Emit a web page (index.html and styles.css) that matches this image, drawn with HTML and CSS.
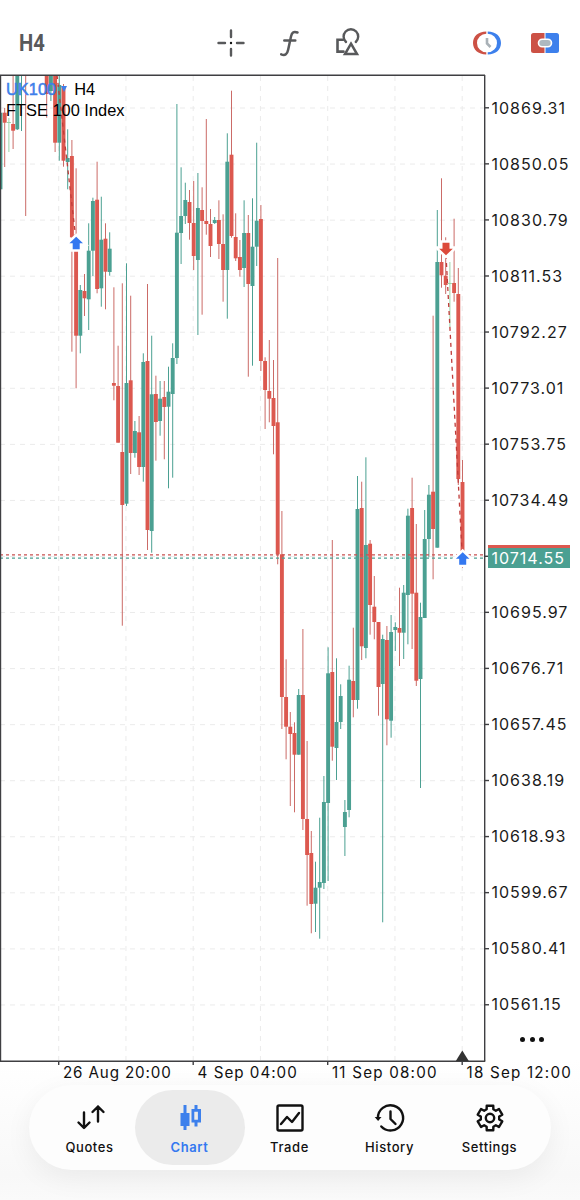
FILE: index.html
```html
<!DOCTYPE html>
<html lang="en">
<head>
<meta charset="utf-8">
<title>UK100 H4</title>
<link rel="stylesheet" href="styles.css">
</head>
<body>
<div class="app">
  <header class="toolbar">
    <span class="timeframe">H4</span>
    <div class="tools">
      <svg class="icon" viewBox="0 0 30 30"><path d="M15 2.500v6.500M15 21v6.500M2.500 15h6.500M21 15h6.500" stroke-width="2.400"/><circle cx="15" cy="15" r="1.2" class="solid"/></svg>
      <svg class="icon" viewBox="0 0 30 30"><path d="M23.500 4.500C19.500 2.800 17.800 4.800 17 8.500L14.200 21.500C13.300 26 11.200 28.100 7.200 26.300M10.300 12.500h11" stroke-width="2.500"/></svg>
      <svg class="icon shapes" viewBox="0 0 30 30"><path d="M12 14A7.300 7.300 0 1 1 21.800 14" stroke-width="2.400"/><path d="M9 11.800H3.500V23.600H9.500" stroke-width="2.600"/><path d="M17 15.700L23 26H11Z" stroke-width="2.500"/></svg>
    </div>
    <div class="modes">
      <svg class="icon" viewBox="0 0 30 30"><path class="red" d="M14.300 3.500C6 3.500 1 8.500 1 15S6 26.500 14.300 26.500V24.300A9.300 9.300 0 0 1 14.300 5.700Z"/><path class="blue" d="M15.700 3.500C24 3.500 29 8.500 29 15S24 26.500 15.700 26.500V24.300A9.300 9.300 0 0 0 15.700 5.700Z"/><path class="hands" d="M15 10V15.500L18.500 19"/></svg>
      <svg class="icon" viewBox="0 0 30 30"><path class="red" d="M14.500 5H3.500a2.500 2.500 0 0 0-2.500 2.500V22.500a2.500 2.500 0 0 0 2.500 2.500H14.500Z"/><path class="blue" d="M15.500 5H26.500a2.500 2.500 0 0 1 2.500 2.500V22.500a2.500 2.500 0 0 1-2.500 2.500H15.500Z"/><rect class="pill" x="8.500" y="11.300" width="13" height="7.400" rx="3.700"/></svg>
    </div>
  </header>
  <main class="chart">
    <svg class="plot" id="plot" viewBox="0 75 486 991"></svg>
    <div class="caption">
      <div><span class="symbol">UK100</span><span class="caret"></span><span>H4</span></div>
      <div>FTSE 100 Index</div>
    </div>
    <div class="prices">
      <div class="price">10869.31</div><div class="price">10850.05</div><div class="price">10830.79</div><div class="price">10811.53</div><div class="price">10792.27</div><div class="price">10773.01</div><div class="price">10753.75</div><div class="price">10734.49</div>
      <div class="price current"><span>10714.55</span></div>
      <div class="price">10695.97</div><div class="price">10676.71</div><div class="price">10657.45</div><div class="price">10638.19</div><div class="price">10618.93</div><div class="price">10599.67</div><div class="price">10580.41</div><div class="price">10561.15</div>
      <div class="more"><i></i><i></i><i></i></div>
    </div>
  </main>
  <div class="dates"><span class="tight">26 Aug 20:00</span><span>4 Sep 04:00</span><span class="loose">11 Sep 08:00</span><span class="loose">18 Sep 12:00</span></div>
  <nav class="tabs">
    <div class="tab"><svg class="tab-icon" viewBox="0 0 30 30"><path d="M9 8.500v15M3.500 18.500L9 24l5.500-5.500M23 17.500V2.500M17.500 8L23 2.500l5.500 5.500"/></svg><span>Quotes</span></div>
    <div class="tab active"><svg class="tab-icon" viewBox="0 0 30 30"><path class="blue" d="M8.500 1h3v8h3v13h-3v4h-3v-4H5.500V9h3Z"/><path class="blue" fill-rule="evenodd" d="M19.500 1h3v4h3.500v13.500h-3.500v4h-3v-4H16.500V5h3ZM19.300 7.800v8h3.600v-8Z"/></svg><span>Chart</span></div>
    <div class="tab"><svg class="tab-icon" viewBox="0 0 30 30"><rect x="2.500" y="1.500" width="25" height="25" rx="1.500"/><path d="M6 20l6-7 5 5 7-9"/></svg><span>Trade</span></div>
    <div class="tab"><svg class="tab-icon" viewBox="0 0 30 30"><path d="M2.900 14A12.600 12.600 0 1 1 6.300 22.500M15.500 7.500v7.500l5 5"/><path class="solid" d="M-.300 13H6.500l-3.400 4Z"/></svg><span>History</span></div>
    <div class="tab"><svg class="tab-icon" viewBox="0 0 30 30"><path id="gear" d=""/><circle cx="15" cy="14" r="4.200"/></svg><span>Settings</span></div>
  </nav>
</div>
<script src="chart.js"></script>
</body>
</html>
```
FILE: styles.css
```css
* { box-sizing: border-box; }
body { margin: 0; background: #fff; font-family: Inter, "Liberation Sans", sans-serif; color: #111; }
.app { width: 580px; height: 1200px; display: flex; flex-direction: column; overflow: hidden; background: linear-gradient(#fff 1060px, #fcfcfc 1110px, #f8f8f8 1175px, #fafafa); }
.toolbar { height: 75px; flex: none; display: flex; align-items: center; padding: 10px 20px 0 19px; }
.timeframe { width: 197px; font: 700 24px Roboto, sans-serif; color: #58595b; transform: scaleX(.84); transform-origin: left; }
.timeframe, .tools, .modes { flex: none; }
.tools { display: flex; gap: 28px; width: 256px; }
.shapes { margin-left: 2px; }
.modes { display: flex; gap: 28px; }
.icon { width: 30px; height: 30px; fill: none; stroke: #58595b; stroke-linecap: round; flex: none; }
.solid { fill: currentColor; stroke: none; }
.red { fill: #cc5145; stroke: none; }
.blue { fill: #3d80ec; stroke: none; }
.hands { stroke: #a9b1b7; stroke-width: 2.6; stroke-linecap: butt; }
.pill { fill: #aeb8c0; stroke: #fff; stroke-width: 1.6; }
.chart { height: 991px; flex: none; display: flex; position: relative; }
.plot { width: 486px; height: 991px; flex: none; overflow: visible; }
.up { fill: #4ba092; }
.down { fill: #dc584f; }
.wick-up { stroke: #4ba092; }
.wick-down { stroke: #cb6b67; }
.flat { fill: #9bd3a8; }
.wick-flat { stroke: #9bd3a8; }
.grid { stroke: #ebebeb; stroke-width: 1; stroke-dasharray: 5 5; fill: none; }
.axis { stroke: #3f3f42; stroke-width: 1.4; fill: none; }
.bid { stroke: #4ba092; stroke-width: 1.3; stroke-dasharray: 3 3; }
.ask { stroke: #c95050; stroke-width: 1.3; stroke-dasharray: 3 3; }
.trade { stroke: #c03c3a; stroke-width: 1.3; stroke-dasharray: 4 4; }
.buy { fill: #3478f0; }
.sell { fill: #dc4a3b; }
.halo { fill: #fff; stroke: #fff; stroke-width: 5; }
.marker { fill: #333; }
.caption { position: absolute; left: 6px; top: 3.500px; font: 16.400px/21px "Liberation Sans", sans-serif; color: #000; white-space: nowrap; }
.symbol { color: #3e7fea; -webkit-text-stroke: .5px #3e7fea; }
.caret { display: inline-block; border: 3.500px solid transparent; border-top: 6px solid #3e7fea; border-bottom: 0; margin: 0 7px 3px 5px; }
.prices { flex: 1; padding-top: 5px; }
.price { height: 56px; line-height: 56px; padding-left: 5.500px; font-size: 16px; letter-spacing: 1px; color: #1b1b1b; white-space: nowrap; }
.current { padding: 17px 0 0 1.500px; position: relative; }
.current span { display: block; width: 82px; height: 23px; border-top: 3px solid #dc584f; background: #4ba092; color: #fff; line-height: 20px; padding-left: 4px; }
.more { display: flex; gap: 4.500px; padding: 5px 0 0 34px; }
.more i { width: 5px; height: 5px; border-radius: 50%; background: #111; }
.dates { height: 19px; flex: none; display: grid; grid-template-columns: 134.600px 134.400px 134.600px 114px; padding-left: 63px; font-size: 15.200px; line-height: 14px; letter-spacing: 1px; color: #111; white-space: nowrap; }
.tight { letter-spacing: .85px; }
.loose { letter-spacing: 1.2px; }
.tabs { width: 522px; height: 85px; flex: none; margin-left: 29px; border-radius: 43px; background: #fdfdfd; box-shadow: 0 8px 28px rgba(0,0,0,.06); display: flex; padding: 5px 6px; justify-content: space-between; }
.tab { width: 110px; height: 75px; margin-right: -10px; border-radius: 38px; display: flex; flex-direction: column; align-items: center; padding: 14px 1px 0 0; font-size: 13px; font-weight: 500; letter-spacing: .6px; line-height: 16px; }
.tab:last-child { margin-right: 0; }
.active { background: #ebebeb; color: #3478f0; font-weight: 600; }
.tab-icon { width: 30px; height: 30px; flex: none; margin-bottom: 5px; fill: none; stroke: #111; stroke-width: 2.400; stroke-linecap: round; stroke-linejoin: round; overflow: visible; }
```
FILE: chart.js
```js
// Each candle: slot, colour, high, low, body top, body bottom.
const candles = [
[0,'u',112.7,189.3,112.7,189.3],[1,'d',108,167,112.7,122.7],[2,'f',118,152,122,123],[3,'d',75,149,124,130.7],[4,'u',75,130,75,129.3],[5,'u',75,131,75,75],[6,'d',75,216,75,75],
[11,'d',75,117.7,75,94],[12,'u',75,101,75,91],[13,'d',75,152,75,142.7],[14,'u',75,160.7,85,142.7],[15,'d',84,166.7,86,160.7],[16,'u',129.3,189.3,158,162],[17,'d',140,351.7,156,237.3],[18,'d',168.3,388.3,251,335.7],[19,'u',285,353.3,290,335.7],
[20,'d',274,316,291,298.3],[21,'u',223.3,330,250.7,299.3],[22,'u',197.7,276,201,250.7],[23,'d',161.7,293.3,199.7,289],[24,'u',196.7,306.7,239.7,288.3],[25,'d',223.3,309.3,238.7,271.7],[26,'u',232.3,275.7,248.7,272],[27,'d',287.3,400.3,383,385.7],[28,'d',345.7,442.7,386,442.7],[29,'d',283.3,625.7,452,505],
[30,'u',263.3,506,383,503.7],[31,'d',295.7,474,380.3,453],[32,'u',421,457.7,431,453],[33,'d',416,475,432.3,467],[34,'u',353.3,481.7,362,467],[35,'d',284,550,361,530],[36,'u',335.7,552.7,394.3,531],[37,'d',375.7,460.7,394,422],[38,'u',381,435.7,398.7,421],[39,'d',381,459.3,397,407],
[40,'u',366.7,488.3,391.7,406.7],[41,'u',343.3,477.7,358,394],[42,'u',104,364,232.7,358],[43,'u',167.3,264,216,233],[44,'u',182.7,224,200,216],[45,'d',190,239.7,202,223],[46,'d',181,270,223,256],[47,'u',173,335,208,260],[48,'d',187.3,314.7,210,221],[49,'d',119,234.7,221,224],
[50,'d',209,257,224,246],[51,'u',217,224,220,223],[52,'d',200.3,259,220,244],[53,'d',214.3,301.7,244,270],[54,'u',133.3,318.7,161.7,270],[55,'d',90.7,237.7,154.7,236],[56,'d',213.3,261,237,258.3],[57,'d',240,276.7,257,270],[58,'u',200.3,287,233,268],[59,'d',215,376.7,233,284],
[60,'u',198.3,365.7,246.7,286],[61,'u',142.7,266,220.7,246.7],[62,'d',205,371,219,361],[63,'d',357.3,429,361,390],[64,'d',340,422.3,391,398.7],[65,'d',360,454.3,398,426],[66,'d',258,564.3,422.3,554.3],[67,'d',511,729,554.3,697],[68,'d',659.3,759.3,697,726.7],[69,'d',712,806,726.7,734],
[70,'d',722.3,812.3,733,754.7],[71,'u',689,754.7,695,754.7],[72,'d',629,830,695,819],[73,'d',741,905.7,819,855],[74,'d',831,933.3,853,904],[75,'u',861.7,932,887.7,903.7],[76,'u',817.7,938.7,882,887.7],[77,'u',776,889,802,883],[78,'u',647.3,881,673.3,803],[79,'d',540,760.7,672,746.7],
[80,'u',658.3,780,722,748],[81,'u',684.3,729,696,722],[82,'u',800,856,812,827],[83,'u',665.7,817.3,679.7,810],[84,'d',627.7,717.3,681,700],[85,'u',476,708.7,509,700],[86,'d',481.7,660,508,646.3],[87,'u',457.3,658.3,545,648],[88,'d',540,634.7,543.7,605],[89,'d',576,639.3,606.7,622],
[90,'d',622,715.7,622,687],[91,'u',634.7,922.3,639,684],[92,'d',626,745.3,640,719.3],[93,'u',615,737.7,632,720.7],[94,'u',622.3,651,627,630],[95,'d',587.7,666,628,632.7],[96,'u',585,659,592.7,632.7],[97,'u',508.7,644.3,515.7,595],[98,'d',477.7,649,508,593.7],[99,'d',524,686,592.7,680.7],
[100,'u',602.7,788,617,679],[101,'u',510,618,539,618],[102,'u',485,557.3,494.7,539],[103,'d',315.7,579.3,491.7,529],[104,'u',210,547.7,262,547.7],[105,'d',178.3,287.7,262,275.3],[106,'d',237.3,294,275.7,285],[107,'f',262,327,283,284],[108,'d',218.7,301.7,283,293],[109,'d',268,485,294,479],[110,'d',460,568,482,551]
];
const kinds = { u: 'up', d: 'down', f: 'flat' };
const parts = [];
const line = (cls, x1, y1, x2, y2) => parts.push(`<path class="${cls}" d="M${x1} ${y1}L${x2} ${y2}"/>`);

for (let i = 0; i < 17; i++) line('grid', 0, 108 + i * 56.06, 484, 108.01 + i * 56.06);
for (let i = 0; i < 7; i++) line('grid', 58.7 + i * 67.25, 76, 58.7 + i * 67.25, 1060);
for (const [slot, kind, high, low, top, bottom] of candles) {
  const x = 0.5 + slot * 4.2;
  line('wick-' + kinds[kind], x, high, x, low);
  parts.push(`<rect class="${kinds[kind]}" x="${x - 1.95}" y="${top}" width="3.9" height="${bottom - top}"/>`);
}
line('ask', 0, 554.8, 484, 554.8);
line('bid', 0, 558.2, 484, 558.2);
line('trade', 57, 75, 76, 240);
line('trade', 446, 255, 462, 551);

function arrow(cls, x, y, dir) {
  const d = `M${x} ${y}l6.8 ${6.5 * dir}h-3.300v${6 * dir}h-7v${-6 * dir}h-3.300z`;
  parts.push(`<path class="halo" d="${d}"/><path class="${cls}" d="${d}"/>`);
}
arrow('buy', 76.2, 236.7, 1);
arrow('sell', 446, 255.3, -1);
arrow('buy', 462.7, 552.3, 1);

line('axis', 0, 75.2, 485, 75.2);
line('axis', 0.5, 75, 0.5, 1061);
line('axis', 484.7, 75, 484.7, 1061);
line('axis', 0, 1061.2, 485.3, 1061.2);
for (let i = 0; i < 17; i++) line('axis', 485, 107.8 + i * 56.06, 489, 107.8 + i * 56.06);
for (let i = 0; i < 4; i++) line('axis', 58.7 + i * 134.5, 1061, 58.7 + i * 134.5, 1065);
parts.push('<path class="marker" d="M455.800 1061L462.300 1050.500L468.800 1061Z"/>');
document.getElementById('plot').innerHTML = parts.join('');

// Six-toothed cog outline: outer and root radii alternate around the centre.
const cog = [];
for (let t = 0; t < 6; t++) {
  for (const [offset, r] of [[-21, 9.3], [-15, 12.700], [15, 12.700], [21, 9.3]]) {
    const a = (t * 60 + offset - 90) * Math.PI / 180;
    cog.push(`${(15 + r * Math.cos(a)).toFixed(2)} ${(14 + r * Math.sin(a)).toFixed(2)}`);
  }
}
document.getElementById('gear').setAttribute('d', 'M' + cog.join('L') + 'Z');
```
